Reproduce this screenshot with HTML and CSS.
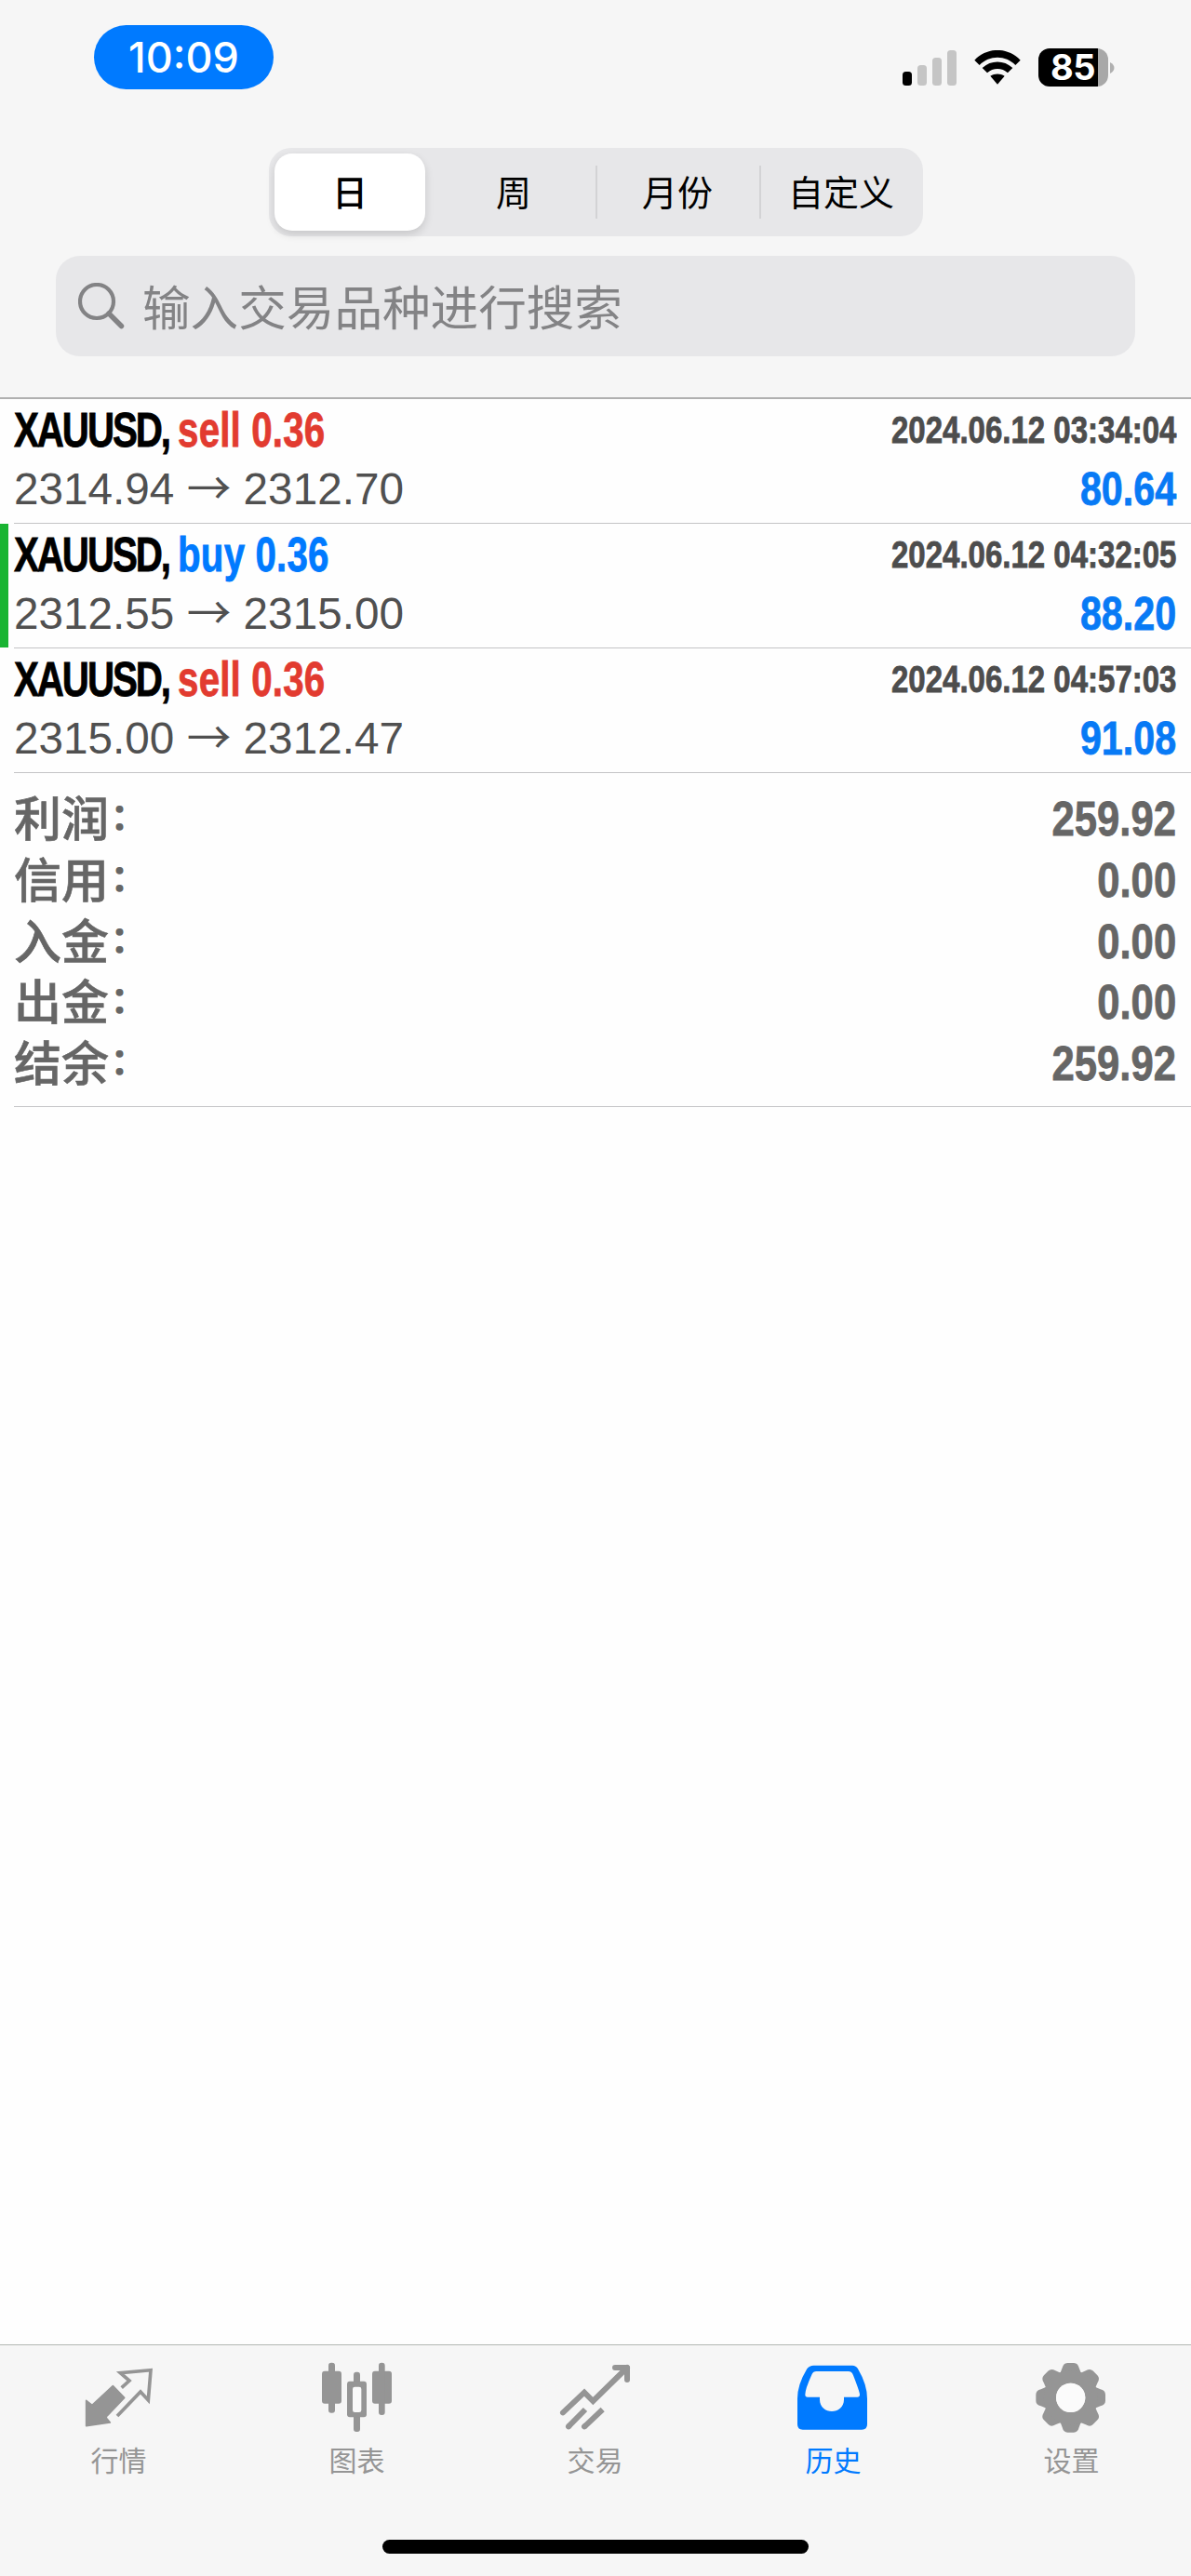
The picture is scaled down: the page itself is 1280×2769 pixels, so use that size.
FILE: index.html
```
<!DOCTYPE html>
<html lang="zh-CN">
<head>
<meta charset="UTF-8" />
<meta name="viewport" content="width=device-width, initial-scale=1" />
<title>历史</title>
<link rel="stylesheet" href="styles.css">
</head>
<body>

<header class="header">
  <div class="status-bar">
    <div class="clock">10:09</div>
    <div class="status-icons">
      <svg class="signal" viewBox="0 0 58 38">
        <rect x="0" y="23" width="10" height="15" rx="3.5"/>
        <g fill="#c5c5c5">
          <rect x="16" y="16" width="10" height="22" rx="3.5"/>
          <rect x="32" y="8" width="10" height="30" rx="3.5"/>
          <rect x="48" y="0" width="10" height="38" rx="3.5"/>
        </g>
      </svg>
      <svg class="wifi" viewBox="0 0 150 111">
        <path d="M1 32C42-11 108-11 149 32L133 48C101 15 49 15 17 48Z"/>
        <path d="M26 57C54 31 96 31 124 57L108 73C90 56 60 56 42 73Z"/>
        <path d="M52 83C66 74 84 74 98 83L75 110Z"/>
      </svg>
      <div class="battery"><span class="battery-level">85</span></div>
      <svg class="battery-tip" viewBox="0 0 5 12"><path d="M0 0C6 3 6 9 0 12Z" fill="#b0b0b0"/></svg>
    </div>
  </div>

  <div class="segments">
    <div class="segment active">日</div>
    <div class="segment">周</div>
    <div class="segment divided">月份</div>
    <div class="segment divided">自定义</div>
  </div>

  <div class="search">
    <svg class="search-icon" viewBox="0 0 50 50" fill="none" stroke="#838385">
      <circle cx="20" cy="20" r="18" stroke-width="4.200"/>
      <path d="M33 33L46.500 46.500" stroke-width="5.500" stroke-linecap="round"/>
    </svg>
    <span class="search-text">输入交易品种进行搜索</span>
  </div>
</header>

<main class="history">
  <div class="deal">
    <div class="deal-line">
      <div class="symbol">XAUUSD, <span class="sell">sell 0.36</span></div>
      <div class="time">2024.06.12 03:34:04</div>
    </div>
    <div class="deal-line prices">
      <div class="price">2314.94 <span class="arrow">→</span> 2312.70</div>
      <div class="profit">80.64</div>
    </div>
  </div>
  <div class="deal marked">
    <div class="deal-line">
      <div class="symbol">XAUUSD, <span class="buy">buy 0.36</span></div>
      <div class="time">2024.06.12 04:32:05</div>
    </div>
    <div class="deal-line prices">
      <div class="price">2312.55 <span class="arrow">→</span> 2315.00</div>
      <div class="profit">88.20</div>
    </div>
  </div>
  <div class="deal">
    <div class="deal-line">
      <div class="symbol">XAUUSD, <span class="sell">sell 0.36</span></div>
      <div class="time">2024.06.12 04:57:03</div>
    </div>
    <div class="deal-line prices">
      <div class="price">2315.00 <span class="arrow">→</span> 2312.47</div>
      <div class="profit">91.08</div>
    </div>
  </div>

  <div class="summary">
    <div class="total"><span class="label">利润<i class="colon">：</i></span><span class="value">259.92</span></div>
    <div class="total"><span class="label">信用<i class="colon">：</i></span><span class="value">0.00</span></div>
    <div class="total"><span class="label">入金<i class="colon">：</i></span><span class="value">0.00</span></div>
    <div class="total"><span class="label">出金<i class="colon">：</i></span><span class="value">0.00</span></div>
    <div class="total"><span class="label">结余<i class="colon">：</i></span><span class="value">259.92</span></div>
  </div>
</main>

<footer class="footer">
  <nav class="tabs">
    <div class="tab">
      <svg viewBox="84 114 240 240" fill="currentColor">
        <path d="M184 194L221 232L166 290Q160 295 165 300L175 312L98 323V241L117 256Z" stroke="currentColor" stroke-width="5" stroke-linejoin="round"/>
        <path d="M212 200L237 177L208 152L306 143L298 240L273 213L198 291" fill="none" stroke="currentColor" stroke-width="11"/>
      </svg>
      <span>行情</span>
    </div>
    <div class="tab">
      <svg viewBox="852 114 240 240" fill="currentColor">
        <rect x="858" y="146" width="63" height="105" rx="9"/>
        <rect x="879" y="119" width="21" height="162" rx="9"/>
        <rect x="1020" y="146" width="63" height="105" rx="9"/>
        <rect x="1041" y="119" width="20" height="169" rx="9"/>
        <rect x="960" y="149" width="21" height="60" rx="9"/>
        <rect x="960" y="270" width="21" height="72" rx="9"/>
        <rect x="939" y="179" width="63" height="116" rx="9"/>
        <rect x="957" y="197" width="28" height="82" rx="7" fill="#fafafa"/>
      </svg>
      <span>图表</span>
    </div>
    <div class="tab">
      <svg viewBox="120 114 240 240" fill="none" stroke="currentColor" stroke-width="18" stroke-linecap="round">
        <path d="M135 280L204 215L232 243L342 135"/>
        <path d="M303 135H342V174" stroke-linejoin="round"/>
        <path d="M207 270L152 326M263 270L204 326" stroke-linecap="butt"/>
        <path d="M153 325L154 324M204 325L205 324"/>
      </svg>
      <span>交易</span>
    </div>
    <div class="tab active">
      <svg viewBox="888 114 240 240" fill="currentColor">
        <path fill-rule="evenodd" d="M943 128H1068Q1080 128 1086 139Q1116 190 1116 235V318Q1116 335 1099 335H908Q891 335 891 318V235Q891 190 922 139Q930 128 943 128ZM952 147Q942 147 938 156Q916 204 916 222Q916 230 924 230H963V238C963 289 1041 289 1041 238V230H1084Q1092 230 1092 222Q1092 214 1071 160Q1067 147 1055 147Z"/>
      </svg>
      <span>历史</span>
    </div>
    <div class="tab">
      <svg viewBox="-116 -118 240 240" fill="currentColor">
        <g id="teeth">
          <path id="tooth" d="M-42-70Q-31-80-27-96Q-23-112-10-112H10Q23-112 27-96Q31-80 42-70Z"/>
          <use href="#tooth" transform="rotate(45)"/>
          <use href="#tooth" transform="rotate(90)"/>
          <use href="#tooth" transform="rotate(135)"/>
        </g>
        <use href="#teeth" transform="rotate(180)"/>
        <circle r="67" fill="none" stroke="currentColor" stroke-width="40"/>
        <circle r="47" fill="#fbfbfb"/>
      </svg>
      <span>设置</span>
    </div>
  </nav>
  <div class="home-indicator"></div>
</footer>

</body>
</html>
```
FILE: styles.css
```
* {
  box-sizing: border-box;
}
body {
  margin: 0;
  width: 1280px;
  height: 2769px;
  display: flex;
  flex-direction: column;
  background-color: #fefefe;
  color: #000;
  font-family: "Liberation Sans", "Noto Sans CJK SC", sans-serif;
}

/* header */
.header {
  height: 429px;
  background: #f6f6f6;
  border-bottom: 2px solid #b0b0b0;
}
.status-bar {
  display: flex;
  justify-content: space-between;
  padding: 27px 82px 0 101px;
  height: 159px;
}
.clock {
  width: 193px;
  height: 69px;
  border-radius: 35px;
  background: #007aff;
  color: #fff;
  font-family: Inter, sans-serif;
  font-size: 45px;
  font-weight: 500;
  line-height: 70px;
  text-align: center;
}
.status-icons {
  display: flex;
  align-items: center;
  height: 91px;
}
.signal {
  width: 58px;
  height: 38px;
  margin-right: 19px;
}
.wifi {
  width: 50px;
  height: 37px;
  margin-right: 19px;
}
.battery {
  width: 75px;
  height: 41px;
  border-radius: 12px;
  background: linear-gradient(90deg, #000 64px, #a8a8a8 64px);
}
.battery-level {
  display: block;
  padding-left: 13px;
  color: #fff;
  font-family: Inter, sans-serif;
  font-size: 38px;
  font-weight: 700;
  letter-spacing: -0.500px;
  line-height: 41px;
}
.battery-tip {
  width: 5px;
  height: 12px;
  margin-left: 2px;
}

.segments {
  display: flex;
  width: 703px;
  height: 95px;
  margin: 0 289px;
  padding: 6px 0 6px 6px;
  border-radius: 24px;
  background: #e7e7e9;
}
.segment {
  flex: 1;
  font-family: "Noto Sans CJK SC", sans-serif;
  font-size: 38px;
  line-height: 80px;
  text-align: center;
}
.segment.active {
  flex: 0 0 162px;
  margin-right: 7px;
  border-radius: 19px;
  background: #fff;
  font-weight: 500;
  box-shadow: 0 4px 10px rgba(0, 0, 0, 0.14);
}
.segment.divided {
  background: linear-gradient(#d3d3d5, #d3d3d5) 0 50% / 2px 57px no-repeat;
}

.search {
  display: flex;
  align-items: center;
  height: 108px;
  margin: 21px 60px 0;
  padding-left: 24px;
  border-radius: 26px;
  background: #e7e7e9;
}
.search-icon {
  width: 50px;
  height: 50px;
}
.search-text {
  margin-left: 19px;
  padding-bottom: 3px;
  color: #838385;
  font-family: "Noto Sans CJK SC", sans-serif;
  font-size: 51.600px;
  line-height: 105px;
}

/* closed deals */
.history {
  flex: 1;
}
.deal {
  position: relative;
  height: 134px;
  margin-left: 15px;
  padding: 4px 16px 0 0;
  border-bottom: 1px solid #c4c4c6;
}
.deal.marked::before {
  content: "";
  position: absolute;
  left: -15px;
  top: 0;
  width: 9px;
  height: 133px;
  background: #19b432;
}
.deal-line {
  display: flex;
  justify-content: space-between;
  align-items: center;
  height: 60px;
  line-height: 60px;
  white-space: nowrap;
}
.deal-line.prices {
  height: 66px;
  line-height: 66px;
}
/* condensed bold */
.symbol,
.time,
.profit,
.value {
  font-weight: 700;
  -webkit-text-stroke: 0.800px currentColor;
  transform: scaleX(0.825);
  transform-origin: right;
}
.symbol {
  font-size: 51px;
  letter-spacing: -2.600px;
  transform: scaleX(0.79);
  transform-origin: left;
}
.sell {
  color: #e23b30;
  letter-spacing: 0.200px;
}
.buy {
  color: #007aff;
  letter-spacing: 0.200px;
}
.time {
  color: #4d4d4d;
  font-size: 40px;
  line-height: 58px;
  padding-bottom: 2px;
}
.price {
  color: #505050;
  font-size: 47.700px;
}
.arrow {
  font-family: "Noto Sans CJK SC", sans-serif;
  line-height: 1;
}
.profit {
  color: #087af5;
  font-size: 50px;
}

/* totals */
.summary {
  height: 359px;
  margin-left: 15px;
  padding: 15px 16px 0 0;
  border-bottom: 1px solid #c4c4c6;
}
.total {
  display: flex;
  justify-content: space-between;
  height: 65.800px;
  color: #666;
}
.label {
  font-family: "Noto Sans CJK SC", sans-serif;
  font-size: 51px;
  font-weight: 500;
  line-height: 62px;
  -webkit-text-stroke: 0.600px #666;
}
.colon {
  margin-left: 2px;
  font-size: 38px;
  font-style: normal;
  line-height: 0;
  vertical-align: 8px;
  -webkit-text-stroke-width: 1.500px;
}
.value {
  font-size: 52px;
  line-height: 68px;
  transform: scaleX(0.84);
}

/* tab bar */
.footer {
  height: 249px;
  background: #f6f6f6;
  border-top: 1px solid #b4b8b4;
}
.tabs {
  display: flex;
  height: 209px;
  padding-top: 17px;
}
.tab {
  flex: 1;
  display: flex;
  flex-direction: column;
  align-items: center;
  color: #959595;
  font-family: "Noto Sans CJK SC", sans-serif;
  font-size: 30px;
  line-height: 50px;
}
.tab span {
  margin-right: 1px;
}
.tab svg {
  width: 80px;
  height: 80px;
}
.tab.active {
  color: #007aff;
}
.home-indicator {
  width: 458px;
  height: 15px;
  margin: 0 auto;
  border-radius: 8px;
  background: #000;
}
```
